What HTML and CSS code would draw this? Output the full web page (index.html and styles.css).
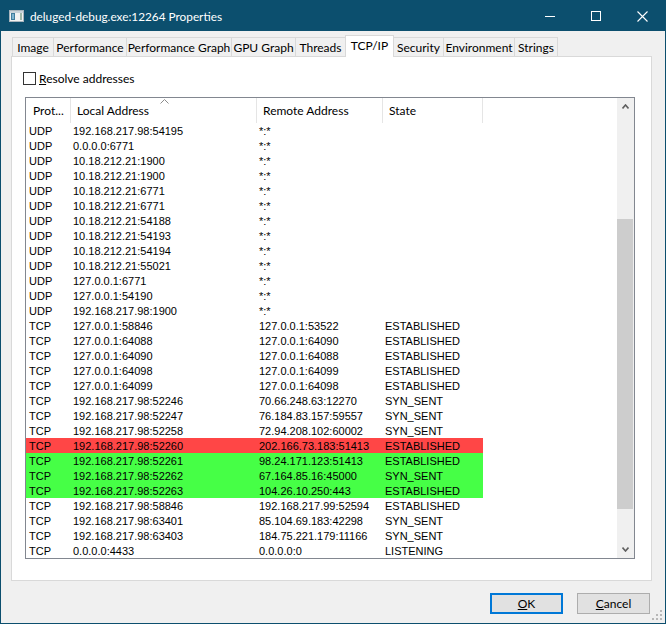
FILE: index.html
```html
<!DOCTYPE html>
<html>
<head>
<meta charset="utf-8">
<link rel="stylesheet" href="styles.css">
</head>
<body>
<div class="window">
  <div class="titlebar">
    <svg class="app-icon" width="15" height="12" viewBox="0 0 15 12">
      <rect x="0.5" y="0.5" width="14" height="11" fill="#f2f2f2" stroke="#a8b4bc"/>
      <rect x="1" y="1" width="13" height="2" fill="#c9d3da"/>
      <rect x="2" y="3" width="4" height="7" fill="#3f7c9c"/>
      <rect x="3" y="4" width="2" height="5" fill="#7fb3cf"/>
      <rect x="11" y="3" width="2" height="7" fill="#9fb7a8"/>
    </svg>
    <div class="title">deluged-debug.exe:12264 Properties</div>
    <div class="caption-btns">
      <div class="cap-btn"><svg width="10" height="10" viewBox="0 0 10 10"><line x1="0" y1="5.5" x2="10" y2="5.5" stroke="#fff" stroke-width="1"/></svg></div>
      <div class="cap-btn"><svg width="10" height="10" viewBox="0 0 10 10"><rect x="0.5" y="0.5" width="9" height="9" fill="none" stroke="#fff" stroke-width="1"/></svg></div>
      <div class="cap-btn"><svg width="11" height="11" viewBox="0 0 11 11"><path d="M0.5 0.5 L10.5 10.5 M10.5 0.5 L0.5 10.5" stroke="#fff" stroke-width="1.1"/></svg></div>
    </div>
  </div>
  <div class="client">
    <div class="tabs">
      <div class="tab t-image">Image</div>
      <div class="tab t-perf">Performance</div>
      <div class="tab t-perfgraph">Performance Graph</div>
      <div class="tab t-gpu">GPU Graph</div>
      <div class="tab t-threads">Threads</div>
      <div class="tab t-tcp selected">TCP/IP</div>
      <div class="tab t-security">Security</div>
      <div class="tab t-env">Environment</div>
      <div class="tab t-strings">Strings</div>
    </div>
    <div class="panel">
      <div class="check">
        <span class="box"></span>
        <span class="check-label"><u>R</u>esolve addresses</span>
      </div>
      <div class="listview">
        <div class="lv-main">
          <div class="lv-header">
            <div class="hcell">Prot...</div>
            <div class="hcell sep">Local Address
              <svg class="sort" width="9" height="5" viewBox="0 0 9 5"><polyline points="0.5,4.5 4.5,0.5 8.5,4.5" fill="none" stroke="#8c8c8c" stroke-width="1"/></svg>
            </div>
            <div class="hcell sep">Remote Address</div>
            <div class="hcell sep">State</div>
            <div class="hcell sep filler"></div>
          </div>
          <div class="lv-rows">
            <div class="row"><span>UDP</span><span>192.168.217.98:54195</span><span>*:*</span><span></span></div>
            <div class="row"><span>UDP</span><span>0.0.0.0:6771</span><span>*:*</span><span></span></div>
            <div class="row"><span>UDP</span><span>10.18.212.21:1900</span><span>*:*</span><span></span></div>
            <div class="row"><span>UDP</span><span>10.18.212.21:1900</span><span>*:*</span><span></span></div>
            <div class="row"><span>UDP</span><span>10.18.212.21:6771</span><span>*:*</span><span></span></div>
            <div class="row"><span>UDP</span><span>10.18.212.21:6771</span><span>*:*</span><span></span></div>
            <div class="row"><span>UDP</span><span>10.18.212.21:54188</span><span>*:*</span><span></span></div>
            <div class="row"><span>UDP</span><span>10.18.212.21:54193</span><span>*:*</span><span></span></div>
            <div class="row"><span>UDP</span><span>10.18.212.21:54194</span><span>*:*</span><span></span></div>
            <div class="row"><span>UDP</span><span>10.18.212.21:55021</span><span>*:*</span><span></span></div>
            <div class="row"><span>UDP</span><span>127.0.0.1:6771</span><span>*:*</span><span></span></div>
            <div class="row"><span>UDP</span><span>127.0.0.1:54190</span><span>*:*</span><span></span></div>
            <div class="row"><span>UDP</span><span>192.168.217.98:1900</span><span>*:*</span><span></span></div>
            <div class="row"><span>TCP</span><span>127.0.0.1:58846</span><span>127.0.0.1:53522</span><span>ESTABLISHED</span></div>
            <div class="row"><span>TCP</span><span>127.0.0.1:64088</span><span>127.0.0.1:64090</span><span>ESTABLISHED</span></div>
            <div class="row"><span>TCP</span><span>127.0.0.1:64090</span><span>127.0.0.1:64088</span><span>ESTABLISHED</span></div>
            <div class="row"><span>TCP</span><span>127.0.0.1:64098</span><span>127.0.0.1:64099</span><span>ESTABLISHED</span></div>
            <div class="row"><span>TCP</span><span>127.0.0.1:64099</span><span>127.0.0.1:64098</span><span>ESTABLISHED</span></div>
            <div class="row"><span>TCP</span><span>192.168.217.98:52246</span><span>70.66.248.63:12270</span><span>SYN_SENT</span></div>
            <div class="row"><span>TCP</span><span>192.168.217.98:52247</span><span>76.184.83.157:59557</span><span>SYN_SENT</span></div>
            <div class="row"><span>TCP</span><span>192.168.217.98:52258</span><span>72.94.208.102:60002</span><span>SYN_SENT</span></div>
            <div class="row removed"><span>TCP</span><span>192.168.217.98:52260</span><span>202.166.73.183:51413</span><span>ESTABLISHED</span></div>
            <div class="row added"><span>TCP</span><span>192.168.217.98:52261</span><span>98.24.171.123:51413</span><span>ESTABLISHED</span></div>
            <div class="row added"><span>TCP</span><span>192.168.217.98:52262</span><span>67.164.85.16:45000</span><span>SYN_SENT</span></div>
            <div class="row added"><span>TCP</span><span>192.168.217.98:52263</span><span>104.26.10.250:443</span><span>ESTABLISHED</span></div>
            <div class="row"><span>TCP</span><span>192.168.217.98:58846</span><span>192.168.217.99:52594</span><span>ESTABLISHED</span></div>
            <div class="row"><span>TCP</span><span>192.168.217.98:63401</span><span>85.104.69.183:42298</span><span>SYN_SENT</span></div>
            <div class="row"><span>TCP</span><span>192.168.217.98:63403</span><span>184.75.221.179:11166</span><span>SYN_SENT</span></div>
            <div class="row"><span>TCP</span><span>0.0.0.0:4433</span><span>0.0.0.0:0</span><span>LISTENING</span></div>
          </div>
        </div>
        <div class="scrollbar">
          <div class="sb-arrow"><svg width="7" height="5" viewBox="0 0 7 5"><polyline points="0.5,4.5 3.5,1 6.5,4.5" fill="none" stroke="#606060" stroke-width="1.6"/></svg></div>
          <div class="sb-track"><div class="sb-thumb"></div></div>
          <div class="sb-arrow"><svg width="7" height="5" viewBox="0 0 7 5"><polyline points="0.5,0.5 3.5,4 6.5,0.5" fill="none" stroke="#606060" stroke-width="1.6"/></svg></div>
        </div>
      </div>
    </div>
    <div class="buttons">
      <div class="btn default"><u>O</u>K</div>
      <div class="btn"><u>C</u>ancel</div>
    </div>
  </div>
  <svg class="grip" width="11" height="11" viewBox="0 0 11 11">
    <g fill="#b8b8b8">
      <rect x="8" y="0" width="2" height="2"/>
      <rect x="4" y="4" width="2" height="2"/><rect x="8" y="4" width="2" height="2"/>
      <rect x="0" y="8" width="2" height="2"/><rect x="4" y="8" width="2" height="2"/><rect x="8" y="8" width="2" height="2"/>
    </g>
  </svg>
</div>
</body>
</html>
```

FILE: styles.css
```css
html, body {
  margin: 0;
  padding: 0;
}
body {
  width: 666px;
  height: 624px;
  overflow: hidden;
  background: #f0f0f0;
}
.window {
  position: relative;
  width: 666px;
  height: 624px;
  box-sizing: border-box;
  border: 1px solid #0c4f6e;
  background: #f0f0f0;
  display: flex;
  flex-direction: column;
  font-family: Lato, sans-serif;
  font-size: 12px;
  color: #000;
}
.titlebar {
  height: 30px;
  flex: none;
  background: #0c4f6e;
  display: flex;
  align-items: center;
  color: #fff;
}
.app-icon {
  margin-left: 8px;
  flex: none;
}
.title {
  margin-left: 6px;
  font-size: 11.8px;
  white-space: nowrap;
}
.caption-btns {
  margin-left: auto;
  display: flex;
  height: 30px;
}
.cap-btn {
  width: 46px;
  height: 30px;
  display: flex;
  align-items: center;
  justify-content: center;
}
.client {
  flex: 1;
  display: flex;
  flex-direction: column;
  padding: 4px 14px 0 10px;
}
.tabs {
  height: 21px;
  display: flex;
  align-items: flex-end;
  padding-left: 1px;
}
.tab {
  box-sizing: border-box;
  height: 19px;
  border: 1px solid #d9d9d9;
  border-bottom: none;
  background: #f0f0f0;
  margin-left: -1px;
  display: flex;
  align-items: center;
  justify-content: center;
  white-space: nowrap;
  padding-top: 1px;
}
.tab:first-child { margin-left: 0; }
.tab.selected {
  height: 22px;
  margin-bottom: -1px;
  background: #fff;
  position: relative;
  z-index: 1;
  padding-top: 0;
  padding-bottom: 2px;
}
.t-image { width: 42px; }
.t-perf { width: 74px; }
.t-perfgraph { width: 106px; }
.t-gpu { width: 65px; }
.t-threads { width: 51px; }
.t-tcp { width: 49px; }
.t-security { width: 51px; }
.t-env { width: 72px; }
.t-strings { width: 44px; }

.panel {
  box-sizing: border-box;
  width: 641px;
  height: 525px;
  border: 1px solid #d9d9d9;
  background: #fff;
  padding: 15px 0 0 11px;
}
.check {
  display: flex;
  align-items: center;
  height: 13px;
}
.box {
  box-sizing: border-box;
  width: 13px;
  height: 13px;
  border: 1px solid #333;
  background: #fff;
}
.check-label {
  margin-left: 3px;
  white-space: nowrap;
}
.listview {
  box-sizing: border-box;
  margin: 12px 0 0 2px;
  width: 610px;
  height: 462px;
  border: 1px solid #828790;
  display: flex;
  overflow: hidden;
}
.lv-main {
  flex: 1;
  overflow: hidden;
}
.lv-header {
  height: 25px;
  display: grid;
  grid-template-columns: 44px 186px 126px 100px 1fr;
}
.hcell {
  position: relative;
  display: flex;
  align-items: center;
  padding-left: 7px;
  white-space: nowrap;
  color: #000;
}
.hcell.sep {
  border-left: 1px solid #e5e5e5;
  padding-left: 6px;
}
.sort {
  position: absolute;
  left: 89px;
  top: 1px;
}
.row {
  width: 457px;
  height: 15px;
  display: grid;
  grid-template-columns: 44px 186px 126px 101px;
  font-family: "Liberation Sans", Arial, sans-serif;
  font-size: 11px;
  line-height: 15px;
}
.row span {
  padding-top: 1px;
  height: 14px;
  padding-left: 3px;
  white-space: nowrap;
  overflow: visible;
}
.row.removed { background: #ff4646; }
.row.added { background: #46ff46; }

.scrollbar {
  width: 17px;
  flex: none;
  background: #f0f0f0;
  display: flex;
  flex-direction: column;
}
.sb-arrow {
  height: 17px;
  flex: none;
  display: flex;
  align-items: center;
  justify-content: center;
}
.sb-track {
  flex: 1;
  padding-top: 104px;
}
.sb-thumb {
  margin: 0 1px 0 0;
  height: 290px;
  background: #cdcdcd;
}
.buttons {
  display: flex;
  justify-content: flex-end;
  gap: 14px;
  margin-top: 12px;
  padding-right: 1px;
}
.btn {
  box-sizing: border-box;
  width: 73px;
  height: 21px;
  background: #e1e1e1;
  border: 1px solid #adadad;
  display: flex;
  align-items: center;
  justify-content: center;
}
.btn.default {
  border: 2px solid #0078d7;
}
.grip {
  position: absolute;
  right: 2px;
  bottom: 2px;
}
```
